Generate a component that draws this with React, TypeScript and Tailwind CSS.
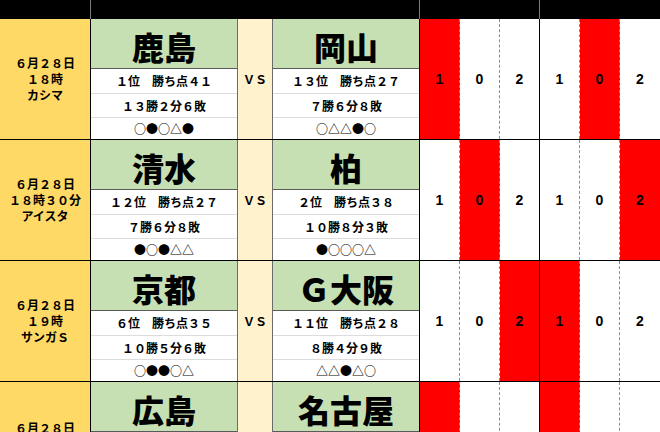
type Team = { name: string; rank: string; record: string; form: string };
type Match = { date: string[]; home: Team; away: Team; red: number[] };

const matches: Match[] = [
  {
    date: ["６月２８日", "１８時", "カシマ"],
    home: { name: "鹿島", rank: "１位　勝ち点４１", record: "１３勝２分６敗", form: "○●○△●" },
    away: { name: "岡山", rank: "１３位　勝ち点２７", record: "７勝６分８敗", form: "○△△●○" },
    red: [0, 4],
  },
  {
    date: ["６月２８日", "１８時３０分", "アイスタ"],
    home: { name: "清水", rank: "１２位　勝ち点２７", record: "７勝６分８敗", form: "●○●△△" },
    away: { name: "柏", rank: "２位　勝ち点３８", record: "１０勝８分３敗", form: "●○○○△" },
    red: [1, 5],
  },
  {
    date: ["６月２８日", "１９時", "サンガＳ"],
    home: { name: "京都", rank: "６位　勝ち点３５", record: "１０勝５分６敗", form: "○●●○△" },
    away: { name: "Ｇ大阪", rank: "１１位　勝ち点２８", record: "８勝４分９敗", form: "△△●△○" },
    red: [2, 3],
  },
  {
    date: ["６月２８日"],
    home: { name: "広島", rank: "", record: "", form: "" },
    away: { name: "名古屋", rank: "", record: "", form: "" },
    red: [0, 3],
  },
];

const scores = ["1", "0", "2", "1", "0", "2"];

// dashed between columns, solid black after the third
const numBorders = [
  "border-r border-dashed border-[#8c8c8c]",
  "border-r border-dashed border-[#8c8c8c]",
  "border-r border-black",
  "border-r border-dashed border-[#8c8c8c]",
  "border-r border-dashed border-[#8c8c8c]",
  "",
];

function TeamCell({ team, edge }: { team: Team; edge: string }) {
  return (
    <div className={`flex w-[147px] shrink-0 flex-col bg-white ${edge}`}>
      <div className="flex h-[50px] items-center justify-center border-b border-[#5a5a5a] bg-[#c6e0b4] pt-[5px] text-[32px] leading-none font-black">
        {team.name}
      </div>
      <div className="flex h-[25px] items-center justify-center border-b border-[#dcdcdc] text-[12px] font-bold">
        {team.rank}
      </div>
      <div className="flex h-[24px] items-center justify-center border-b border-[#dcdcdc] text-[12px] font-bold">
        {team.record}
      </div>
      <div className="flex flex-1 items-center justify-center text-[12px] font-bold">
        {team.form}
      </div>
    </div>
  );
}

export default function App() {
  return (
    <div className="h-[432px] w-[660px] overflow-hidden bg-white font-['Noto_Sans_CJK_JP',sans-serif] text-black">
      {/* Header */}
      <div className="flex h-[19px] bg-black">
        <div className="w-[91px] border-r border-[#7a7a7a]" />
        <div className="w-[329px] border-r border-[#7a7a7a]" />
        <div className="w-[120px] border-r border-[#7a7a7a]" />
        <div className="flex-1" />
      </div>

      {/* Matches */}
      {matches.map((m) => (
        <div key={m.home.name} className="flex h-[121px] shrink-0 border-b border-black">
          <div className="flex w-[91px] shrink-0 flex-col items-center justify-center border-r border-black bg-[#ffd966] text-[12px] leading-[16px] font-bold">
            {m.date.length === 3 ? (
              m.date.map((line) => <span key={line}>{line}</span>)
            ) : (
              <span className="-mt-[29px]">{m.date[0]}</span>
            )}
          </div>

          <TeamCell team={m.home} edge="border-r border-[#6b6b6b]" />

          <div className="flex w-[35px] shrink-0 items-center justify-center border-r border-[#6b6b6b] bg-[#fff2cc] text-[12px] font-bold">
            {m.date.length === 3 ? "ＶＳ" : ""}
          </div>

          <TeamCell team={m.away} edge="border-r border-black" />

          {scores.map((s, i) => (
            <div
              key={i}
              className={`flex w-[40px] shrink-0 items-center justify-center font-['Liberation_Sans',sans-serif] text-[14px] font-bold ${numBorders[i]} ${
                m.red.includes(i) ? "bg-[#ff0000]" : "bg-white"
              }`}
            >
              {m.date.length === 3 ? s : ""}
            </div>
          ))}
        </div>
      ))}
    </div>
  );
}
